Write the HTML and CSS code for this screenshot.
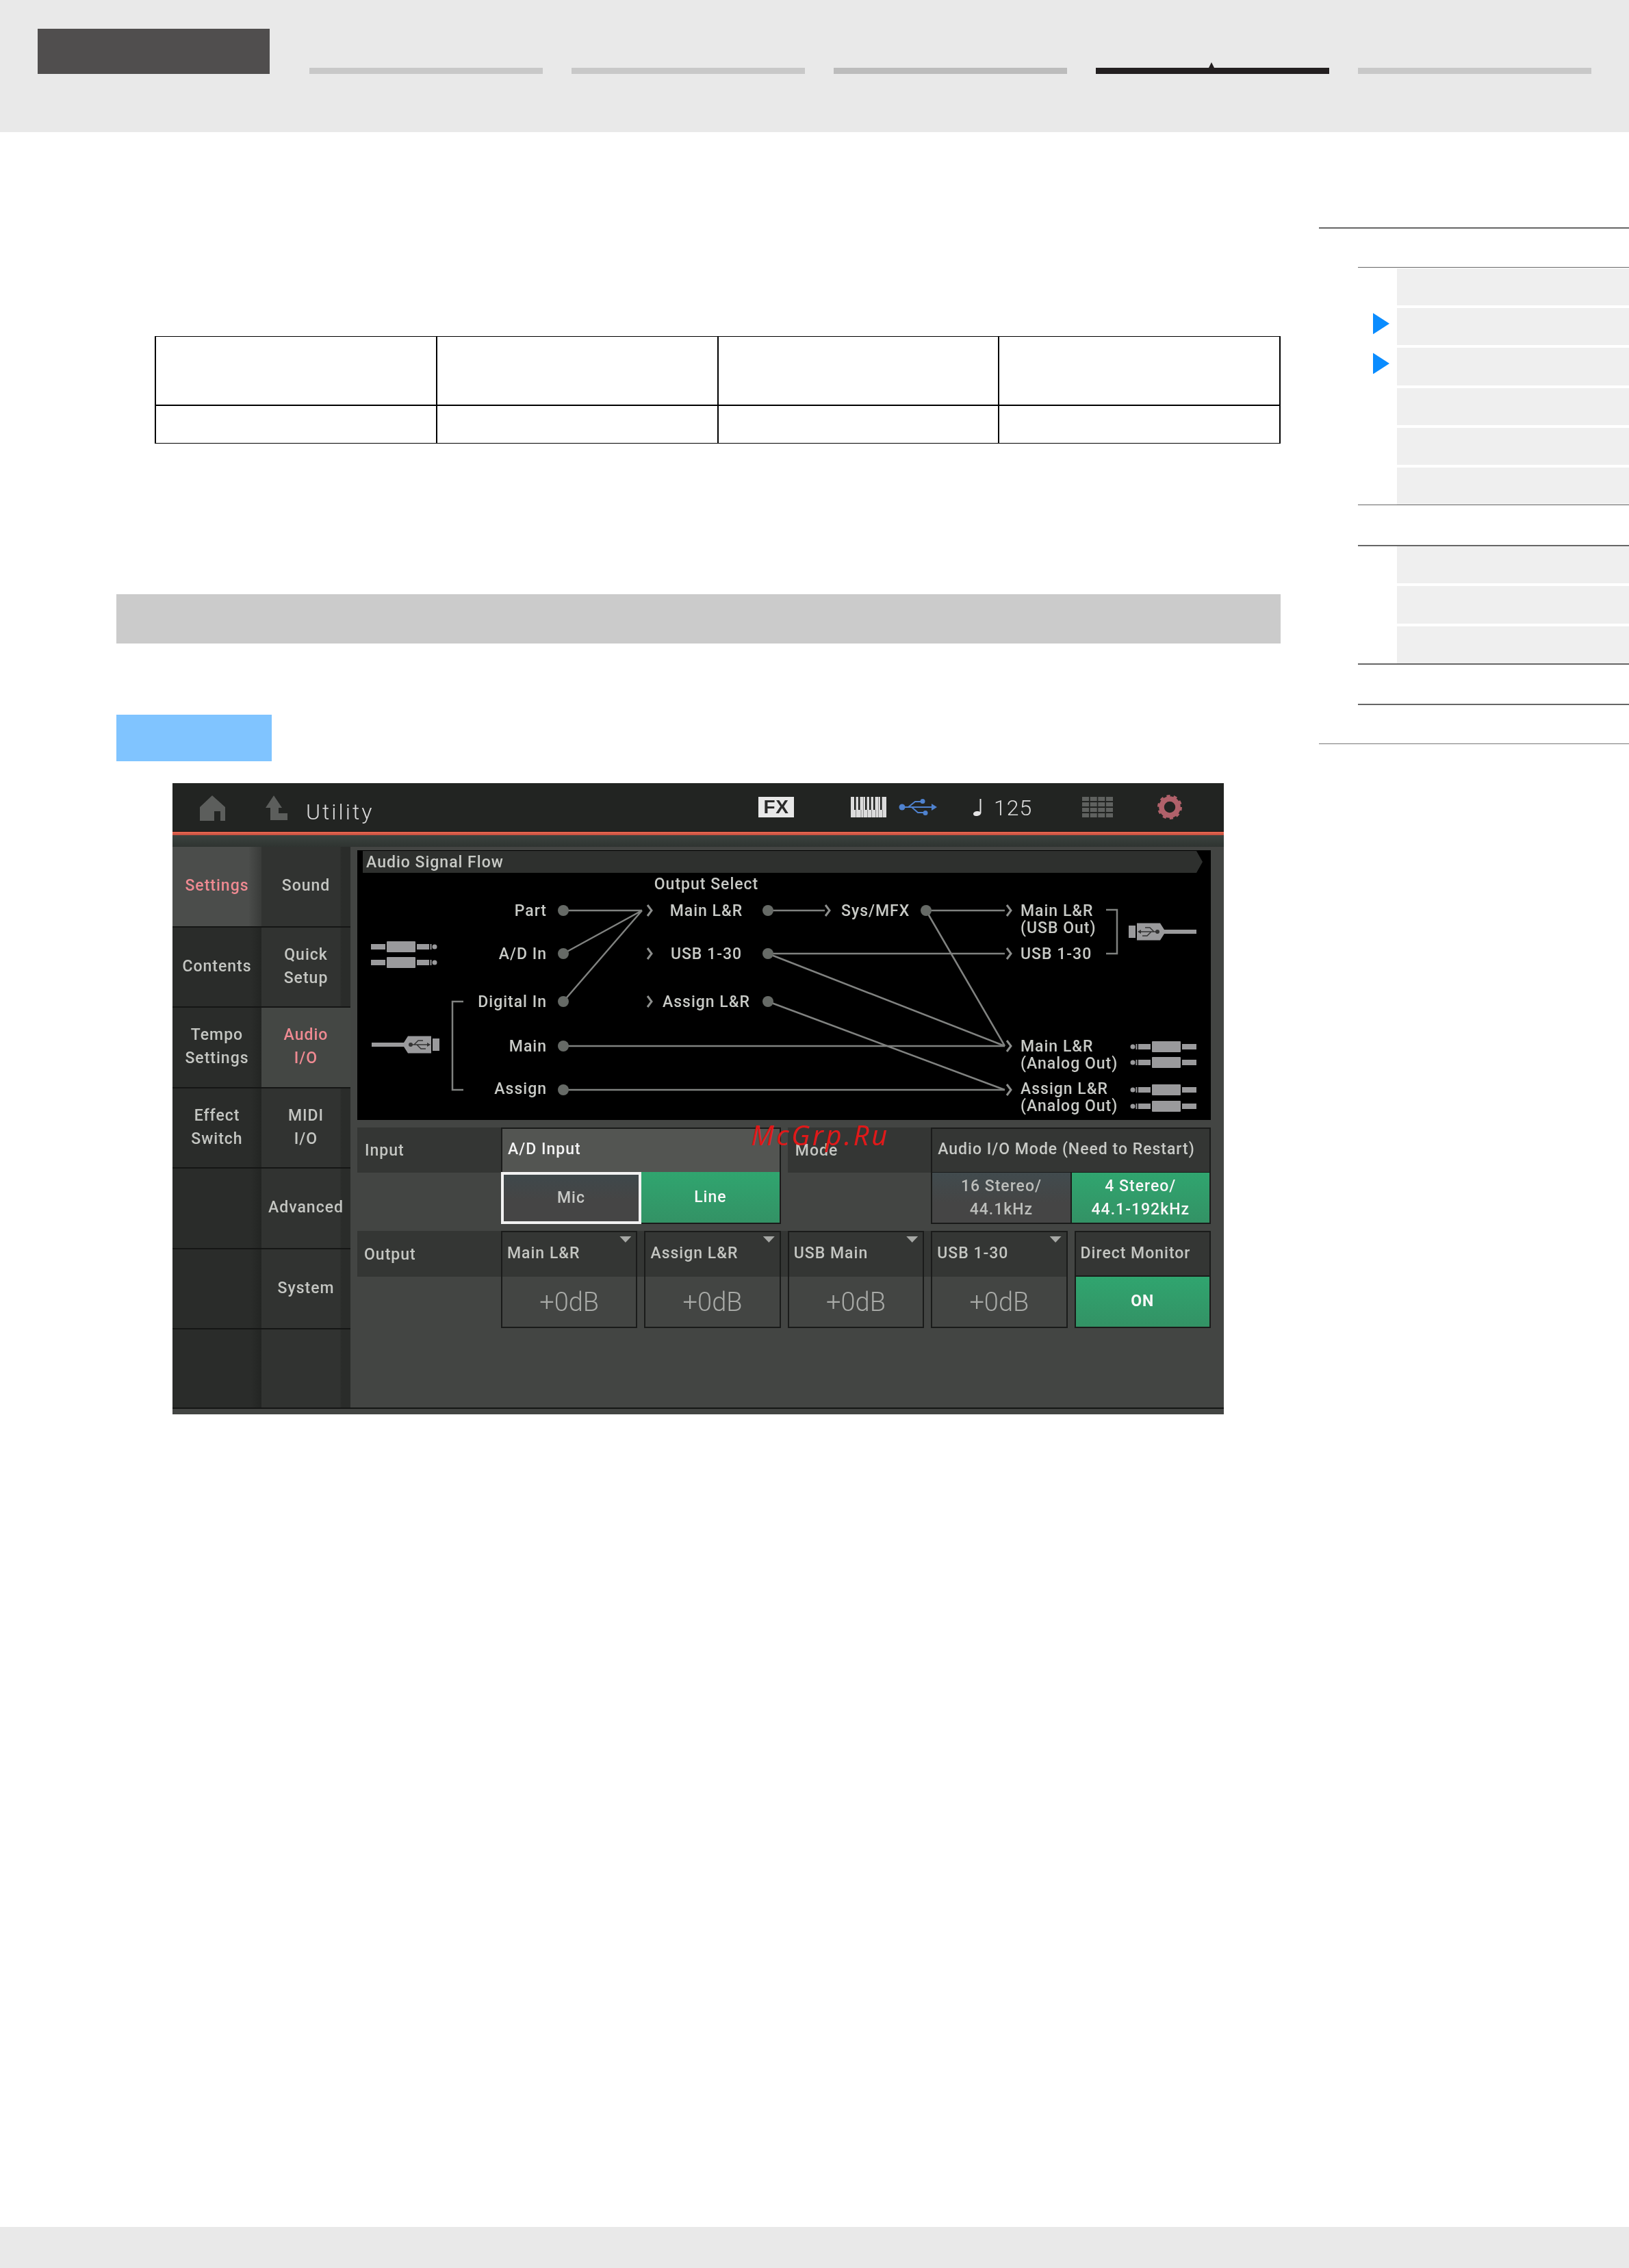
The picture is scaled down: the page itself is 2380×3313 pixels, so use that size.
FILE: index.html
```html
<!DOCTYPE html>
<html lang="en">
<head>
<meta charset="utf-8">
<title>Utility - Audio I/O</title>
<link rel="stylesheet" href="styles.css">
</head>
<body>
<header class="page-head">
  <div class="logo"></div>
  <nav class="tabs">
    <div class="tab"></div>
    <div class="tab"></div>
    <div class="tab tab-mid"></div>
    <div class="tab tab-on"></div>
    <div class="tab"></div>
  </nav>
</header>

<div class="page-body">
  <main class="doc">
    <table class="spec">
      <tr class="spec-top"><td></td><td></td><td></td><td></td></tr>
      <tr class="spec-low"><td></td><td></td><td></td><td></td></tr>
    </table>
    <div class="section-bar"></div>
    <div class="blue-tag"></div>

    <div class="screen-wrap">
      <div class="screen">
        <div class="topbar">
          <svg class="ic-home" viewBox="0 0 37 37"><path d="M18 0 37 17V37H30V23H21V37H0V17Z"/></svg>
          <svg class="ic-up" viewBox="0 0 32 36"><path d="M12 0 24 18H19V26H32V36H7V18H0Z"/></svg>
          <span class="title">Utility</span>
          <div class="bar-right">
            <span class="fx">FX</span>
            <svg class="ic-keys" viewBox="0 0 52 30">
              <rect width="52" height="30" fill="#dcdcdc"/>
              <g fill="#1c1e1c">
                <rect x="5" width="2.500" height="19"/><rect x="11" width="2.500" height="19"/>
                <rect x="21" width="2.500" height="19"/><rect x="27" width="2.500" height="19"/><rect x="33" width="2.500" height="19"/>
                <rect x="43" width="2.500" height="19"/>
              </g>
              <g fill="#8c8c8c">
                <rect x="7" y="19" width="1" height="11"/><rect x="14.500" y="19" width="1" height="11"/><rect x="18" y="0" width="1" height="30"/>
                <rect x="24" y="19" width="1" height="11"/><rect x="30" y="19" width="1" height="11"/><rect x="36" y="19" width="1" height="11"/>
                <rect x="40" y="0" width="1" height="30"/><rect x="46" y="19" width="1" height="11"/>
              </g>
            </svg>
            <svg class="ic-usb" viewBox="0 0 56 26" fill="none" stroke="#4f82cf" stroke-width="2">
              <circle cx="5" cy="13" r="4.5" fill="#4f82cf" stroke="none"/>
              <path d="M5 13H50M14 13 24 5H34M19 13 28 21H38"/>
              <path d="M48 8 56 13 48 18Z" fill="#4f82cf" stroke="none"/>
              <circle cx="35" cy="4.5" r="3.5" fill="#4f82cf" stroke="none"/>
              <circle cx="39" cy="21.5" r="3.5" fill="#4f82cf" stroke="none"/>
            </svg>
            <svg class="ic-note" viewBox="0 0 12 25"><path d="M9.500 0H11.500V20C11.500 23 8 25 4 25 1 25 0 23.500 0 22 0 19.500 3 18 6 18 7.500 18 8.800 18.300 9.500 19Z" fill="#e4e4e4"/></svg>
            <span class="tempo">125</span>
            <svg class="ic-grid" viewBox="0 0 45 30" fill="#5f615f">
              <rect width="10" height="6"/><rect x="11.700" width="10" height="6"/><rect x="23.300" width="10" height="6"/><rect x="35" width="10" height="6"/>
              <rect y="8" width="10" height="6"/><rect x="11.700" y="8" width="10" height="6"/><rect x="23.300" y="8" width="10" height="6"/><rect x="35" y="8" width="10" height="6"/>
              <rect y="16" width="10" height="6"/><rect x="11.700" y="16" width="10" height="6"/><rect x="23.300" y="16" width="10" height="6"/><rect x="35" y="16" width="10" height="6"/>
              <rect y="24" width="10" height="6"/><rect x="11.700" y="24" width="10" height="6"/><rect x="23.300" y="24" width="10" height="6"/><rect x="35" y="24" width="10" height="6"/>
            </svg>
            <svg class="ic-gear" viewBox="0 0 36 36" fill="none" stroke="#b0616a">
              <circle cx="18" cy="18" r="12" stroke-width="7.500"/>
              <circle cx="18" cy="18" r="16" stroke-width="4" stroke-dasharray="5.030 5.030"/>
            </svg>
          </div>
        </div>
        <div class="redline"></div>
        <div class="substrip"></div>

        <div class="work">
          <nav class="menu">
            <div class="cell c1 c1-on">Settings</div>
            <div class="cell c2">Sound</div>
            <div class="cell c1">Contents</div>
            <div class="cell c2">Quick<br>Setup</div>
            <div class="cell c1">Tempo<br>Settings</div>
            <div class="cell c2 c2-on">Audio<br>I/O</div>
            <div class="cell c1">Effect<br>Switch</div>
            <div class="cell c2">MIDI<br>I/O</div>
            <div class="cell c1"></div>
            <div class="cell c2">Advanced</div>
            <div class="cell c1"></div>
            <div class="cell c2">System</div>
            <div class="cell c1"></div>
            <div class="cell c2"></div>
          </nav>

          <section class="content">
            <svg class="flow" viewBox="522 1242 1247 394">
              <defs>
                <g id="jack" fill="#9a9a9c">
                  <rect x="0" y="-4" width="21" height="8"/>
                  <rect x="23" y="-8" width="42" height="16" rx="1"/>
                  <rect x="67" y="-4" width="18" height="8"/>
                  <rect x="86.500" y="-4" width="2" height="8"/>
                  <circle cx="93" cy="0" r="3.500"/>
                </g>
                <g id="usbplug">
                  <path fill="#9a9a9c" d="M0-3H47L53-12.500H87V12.500H53L47 3H0ZM89-9H99V9H89Z"/>
                  <g fill="none" stroke="#333" stroke-width="1.500">
                    <path d="M56 0H82M62 0 68-6H75M66 0 72 6H79"/>
                  </g>
                  <circle cx="57" cy="0" r="3" fill="#333"/>
                  <path d="M81-3 86 0 81 3Z" fill="#333"/>
                </g>
                <path id="chev" d="M-3-8 3 0-3 8"/>
              </defs>

              <path class="flow-bar" d="M530 1243H1748L1757 1259 1748 1275H530Z"/>
              <text class="t t-head" x="535" y="1267">Audio Signal Flow</text>

              <g class="wires">
                <path d="M823 1330H938M823 1393 938 1330M823 1463 938 1330"/>
                <path d="M823 1528H1468M823 1592H1468"/>
                <path d="M1122 1330H1205M1353 1330H1468M1122 1393H1468"/>
                <path d="M1122 1393 1468 1528M1353 1330 1468 1528M1122 1463 1468 1592"/>
                <path d="M677 1463H661V1592H677M1616 1329H1632V1393H1616"/>
              </g>
              <g class="chevs">
                <use href="#chev" x="949" y="1330"/><use href="#chev" x="949" y="1393"/><use href="#chev" x="949" y="1463"/>
                <use href="#chev" x="1209" y="1330"/>
                <use href="#chev" x="1474" y="1330"/><use href="#chev" x="1474" y="1393"/><use href="#chev" x="1474" y="1528"/><use href="#chev" x="1474" y="1592"/>
              </g>
              <g class="dots">
                <circle cx="823" cy="1330" r="8"/><circle cx="823" cy="1393" r="8"/><circle cx="823" cy="1463" r="8"/><circle cx="823" cy="1528" r="8"/><circle cx="823" cy="1592" r="8"/>
                <circle cx="1122" cy="1330" r="8"/><circle cx="1122" cy="1393" r="8"/><circle cx="1122" cy="1463" r="8"/>
                <circle cx="1353" cy="1330" r="8"/>
              </g>

              <g class="t end">
                <text x="799" y="1338">Part</text><text x="799" y="1401">A/D In</text><text x="799" y="1471">Digital In</text><text x="799" y="1536">Main</text><text x="799" y="1598">Assign</text>
              </g>
              <g class="t mid">
                <text x="1032" y="1299">Output Select</text><text x="1032" y="1338">Main L&amp;R</text><text x="1032" y="1401">USB 1-30</text><text x="1032" y="1471">Assign L&amp;R</text>
              </g>
              <g class="t">
                <text x="1229" y="1338">Sys/MFX</text>
                <text x="1491" y="1338">Main L&amp;R</text><text x="1491" y="1363">(USB Out)</text><text x="1491" y="1401">USB 1-30</text>
                <text x="1491" y="1536">Main L&amp;R</text><text x="1491" y="1561">(Analog Out)</text>
                <text x="1491" y="1598">Assign L&amp;R</text><text x="1491" y="1623">(Analog Out)</text>
              </g>

              <use href="#jack" transform="translate(542 1383)"/>
              <use href="#jack" transform="translate(542 1406)"/>
              <use href="#usbplug" transform="translate(543 1526)"/>
              <use href="#usbplug" transform="translate(1748 1361) scale(-1 1)"/>
              <use href="#jack" transform="translate(1748 1529) scale(-1 1)"/>
              <use href="#jack" transform="translate(1748 1552) scale(-1 1)"/>
              <use href="#jack" transform="translate(1748 1592) scale(-1 1)"/>
              <use href="#jack" transform="translate(1748 1616) scale(-1 1)"/>
            </svg>

            <div class="io">
              <div class="rowlabel lab-input">Input</div>
              <div class="block block-ad">
                <div class="block-head head-light">A/D Input</div>
                <div class="opts">
                  <div class="opt opt-focus">Mic</div>
                  <div class="opt opt-green">Line</div>
                </div>
              </div>
              <div class="rowlabel lab-mode">Mode</div>
              <div class="block block-mode">
                <div class="block-head">Audio I/O Mode (Need to Restart)</div>
                <div class="opts opts-mode">
                  <div class="opt opt-off">16 Stereo/<br>44.1kHz</div>
                  <div class="opt opt-green">4 Stereo/<br>44.1-192kHz</div>
                </div>
              </div>

              <div class="band"><span class="band-text">Output</span></div>
              <div class="out out-2"><div class="out-head">Main L&amp;R<i class="tri"></i></div><div class="out-val">+0dB</div></div>
              <div class="out out-3"><div class="out-head">Assign L&amp;R<i class="tri"></i></div><div class="out-val">+0dB</div></div>
              <div class="out out-4"><div class="out-head">USB Main<i class="tri"></i></div><div class="out-val">+0dB</div></div>
              <div class="out out-5"><div class="out-head">USB 1-30<i class="tri"></i></div><div class="out-val">+0dB</div></div>
              <div class="out out-6"><div class="out-head out-head-solid">Direct Monitor</div><div class="out-on">ON</div></div>
            </div>
          </section>
        </div>
        <div class="screen-foot"></div>
      </div>
      <div class="watermark">McGrp.Ru</div>
    </div>
  </main>

  <aside class="side">
    <div class="rule rule-top"></div>
    <div class="sub sub-a">
      <div class="item"><span class="mark"></span><span class="bar"></span></div>
      <div class="item"><span class="mark"><i class="arrow"></i></span><span class="bar"></span></div>
      <div class="item"><span class="mark"><i class="arrow"></i></span><span class="bar"></span></div>
      <div class="item"><span class="mark"></span><span class="bar"></span></div>
      <div class="item"><span class="mark"></span><span class="bar"></span></div>
      <div class="item"><span class="mark"></span><span class="bar"></span></div>
    </div>
    <div class="sub sub-b">
      <div class="item"><span class="mark"></span><span class="bar"></span></div>
      <div class="item"><span class="mark"></span><span class="bar"></span></div>
      <div class="item"><span class="mark"></span><span class="bar"></span></div>
    </div>
    <div class="rule rule-c"></div>
    <div class="rule rule-end"></div>
  </aside>
</div>

<footer class="page-foot"></footer>
</body>
</html>
```
FILE: styles.css
```css
* { box-sizing: border-box; }
html, body { margin: 0; padding: 0; }
body {
  width: 2380px;
  height: 3313px;
  display: flex;
  flex-direction: column;
  background: #fff;
  font-family: Roboto, "Liberation Sans", sans-serif;
  overflow: hidden;
}

/* page header */
.page-head {
  height: 193px;
  background: #e9e9e9;
  display: flex;
  align-items: flex-start;
  padding: 42px 0 0 55px;
}
.logo { width: 339px; height: 66px; background: #504e4e; }
.tabs { display: flex; gap: 42.5px; margin: 57px 0 0 58px; }
.tab { width: 340.5px; height: 9px; background: #c8c8c8; position: relative; }
.tab-mid { background: #bcbcbc; }
.tab-on { background: #231f20; }
.tab-on::after {
  content: "";
  position: absolute;
  left: 165px;
  top: -8px;
  width: 8px;
  height: 8px;
  background: #231f20;
  clip-path: polygon(50% 0, 100% 100%, 0 100%);
}

.page-body { flex: 1; display: flex; min-height: 0; }

/* document column */
.doc { width: 1701px; margin-left: 170px; padding-top: 298px; }
.spec {
  width: 1645px;
  height: 157px;
  margin-left: 56px;
  border-collapse: separate;
  border-spacing: 0;
  table-layout: fixed;
  border-left: 2px solid #000;
  border-top: 1px solid #000;
}
.spec td { padding: 0; border-right: 2px solid #000; }
.spec-top td { height: 100px; border-bottom: 2px solid #000; }
.spec-low td { height: 54px; border-bottom: 1px solid #000; }
.section-bar { height: 72px; margin-top: 220px; background: #cbcbcb; }
.blue-tag { width: 227px; height: 68px; margin-top: 104px; background: #80c4ff; }

/* device screen */
.screen-wrap { position: relative; width: 1536px; margin: 32px 0 0 82px; }
.screen {
  height: 922px;
  background: #434543;
  display: flex;
  flex-direction: column;
  filter: blur(0.6px);
  color: #c4c6c2;
  font-size: 23px;
  font-weight: 500;
  letter-spacing: 1px;
}
.topbar {
  height: 70px;
  flex: none;
  background: #222422;
  display: flex;
  align-items: center;
  padding-left: 40px;
}
.ic-home { width: 37px; height: 37px; fill: #5c5e5c; margin-top: 2px; }
.ic-up { width: 32px; height: 36px; fill: #5c5e5c; margin: 2px 0 0 59px; }
.title {
  margin: 13px 0 0 27px;
  font-size: 32px;
  font-weight: 300;
  letter-spacing: 3px;
  color: #dadada;
}
.bar-right { margin-left: auto; padding-right: 61px; display: flex; align-items: center; }
.fx {
  width: 52px;
  height: 30px;
  background: #e8e8e8;
  color: #2a2a2a;
  font-family: "Liberation Sans", sans-serif;
  font-size: 28px;
  font-weight: 700;
  letter-spacing: 0.5px;
  line-height: 30px;
  text-align: center;
}
.ic-keys { width: 52px; height: 30px; margin-left: 83px; }
.ic-usb { width: 56px; height: 26px; margin-left: 18px; }
.ic-note { width: 12px; height: 25px; margin-left: 53px; }
.tempo {
  width: 56px;
  margin: 2px 0 0 18px;
  font-size: 32px;
  font-weight: 300;
  letter-spacing: 1px;
  color: #dadada;
}
.ic-grid { width: 45px; height: 30px; margin-left: 73px; }
.ic-gear { width: 36px; height: 36px; margin-left: 65px; }
.redline {
  height: 6px;
  flex: none;
  border-top: 1px solid #0e0e0e;
  background: linear-gradient(#e86a52, #c44e40);
}
.substrip { height: 17px; flex: none; background: linear-gradient(#3b433f, #2f3431); }

.work { flex: 1; display: flex; min-height: 0; }
.menu {
  width: 260px;
  flex: none;
  display: grid;
  grid-template-columns: 130px 130px;
  grid-auto-rows: 117.5px;
}
.cell {
  display: flex;
  align-items: center;
  justify-content: center;
  text-align: center;
  line-height: 34px;
  border-bottom: 2px solid #151615;
  padding-bottom: 1px;
}
.c1 { background: linear-gradient(90deg, #2a2c2a 88%, #232523); }
.c2 { background: linear-gradient(90deg, #313331 88%, #2a2c2a 90%); }
.c1-on { background: linear-gradient(90deg, #4b4d4b 85%, #393b39); color: #ef8a92; }
.c2-on { background: #444744; color: #ef8a92; }

.content { flex: 1; padding: 5px 19px 0 10px; }
.flow { display: block; width: 1247px; height: 394px; background: #000; }
.flow-bar { fill: #2e302e; }
.t text, .t-head {
  font-family: Roboto, "Liberation Sans", sans-serif;
  font-size: 23px;
  font-weight: 500;
  letter-spacing: 1px;
  fill: #c8cac6;
}
.end text { text-anchor: end; }
.mid text { text-anchor: middle; }
.wires { fill: none; stroke: #808280; stroke-width: 2.500; }
.chevs { fill: none; stroke: #8c8e8c; stroke-width: 3; }
.dots { fill: #666a66; }

/* input/output controls */
.io {
  margin-top: 11px;
  display: grid;
  grid-template-columns: 200px repeat(5, 1fr);
  grid-template-rows: 141px 142px;
  column-gap: 10px;
  row-gap: 10px;
}
.rowlabel {
  height: 66px;
  background: #343634;
  padding-left: 11px;
  line-height: 68px;
}
.lab-input { grid-column: 1; grid-row: 1; margin-right: -10px; }
.lab-mode { grid-column: 4; grid-row: 1; margin-right: -10px; }
.block { display: flex; flex-direction: column; grid-row: 1; }
.block-ad { grid-column: 2 / 4; }
.block-mode { grid-column: 5 / 7; background: #1a1b1a; }
.block-head {
  height: 65px;
  flex: none;
  background: #343634;
  border-top: 2px solid #1a1b1a;
  border-left: 2px solid #1a1b1a;
  border-right: 2px solid #1a1b1a;
  padding-left: 8px;
  line-height: 60px;
  color: #c8cac6;
}
.head-light { background: #535552; color: #f4f4f4; }
.opts { flex: 1; display: flex; }
.opts-mode { padding: 1px 2px 2px; gap: 2px; }
.opt {
  flex: 1;
  display: flex;
  align-items: center;
  justify-content: center;
  text-align: center;
  line-height: 34px;
}
.opt-focus {
  flex: none;
  width: 205px;
  border: 4px solid #f2f2f2;
  background: linear-gradient(#3f484b, #454545 55%);
  color: #c8cac7;
}
.opt-green {
  background: linear-gradient(#30a56f, #339265);
  color: #f8f8f8;
  border-bottom: 2px solid #1a1b1a;
  border-right: 2px solid #1a1b1a;
}
.opts-mode .opt-green { border: 0; }
.opt-off { background: linear-gradient(#414b4e, #454545 60%); color: #bcbebb; }

.band { grid-column: 1 / 6; grid-row: 2; height: 67px; background: #343634; padding-left: 10px; line-height: 70px; }
.out { grid-row: 2; border: 2px solid #1a1b1a; display: flex; flex-direction: column; z-index: 1; }
.out-2 { grid-column: 2; }
.out-3 { grid-column: 3; }
.out-4 { grid-column: 4; }
.out-5 { grid-column: 5; }
.out-6 { grid-column: 6; }
.out-head {
  height: 65px;
  flex: none;
  padding-left: 7px;
  line-height: 62px;
  position: relative;
}
.out-head-solid { background: #343634; border-bottom: 2px solid #1a1b1a; }
.tri {
  position: absolute;
  right: 7px;
  top: 6px;
  width: 17px;
  height: 9px;
  background: #a6a8a5;
  clip-path: polygon(0 0, 100% 0, 50% 100%);
}
.out-val {
  flex: 1;
  display: flex;
  align-items: center;
  justify-content: center;
  font-size: 38px;
  font-weight: 300;
  letter-spacing: 0;
  color: #a8aaa7;
}
.out-on {
  flex: 1;
  display: flex;
  align-items: center;
  justify-content: center;
  padding-bottom: 2px;
  background: linear-gradient(#30a56f, #339265);
  color: #f8f8f8;
  font-weight: 700;
}
.screen-foot { height: 10px; flex: none; border-top: 2px solid #151615; background: #434543; }

.watermark {
  position: absolute;
  left: 845px;
  top: 491px;
  font-family: "Open Sans", "Liberation Sans", sans-serif;
  font-size: 40px;
  font-style: italic;
  font-weight: 400;
  letter-spacing: 3.6px;
  line-height: 46px;
  color: #e01818;
}

/* right rail */
.side { width: 453px; margin-left: 56px; padding-top: 139px; }
.rule-top { height: 2px; background: #666; }
.sub { margin-left: 57px; display: flex; flex-direction: column; gap: 4px; }
.sub-a { margin-top: 56px; border-top: 1px solid #666; border-bottom: 1px solid #666; padding-top: 1px; }
.sub-b { margin-top: 58px; border-top: 2px solid #666; border-bottom: 2px solid #666; padding-top: 0; }
.item { height: 54.2px; display: flex; }
.mark { width: 57px; flex: none; padding: 7px 0 0 22px; }
.bar { flex: 1; background: #efefef; }
.arrow {
  display: block;
  width: 24px;
  height: 31px;
  background: #0a8cff;
  clip-path: polygon(0 0, 100% 50%, 0 100%);
}
.rule-c { height: 2px; margin: 57px 0 0 57px; background: #666; }
.rule-end { height: 1px; margin-top: 56px; background: #777; }

.page-foot { height: 60px; flex: none; background: #e9e9e9; }
```
